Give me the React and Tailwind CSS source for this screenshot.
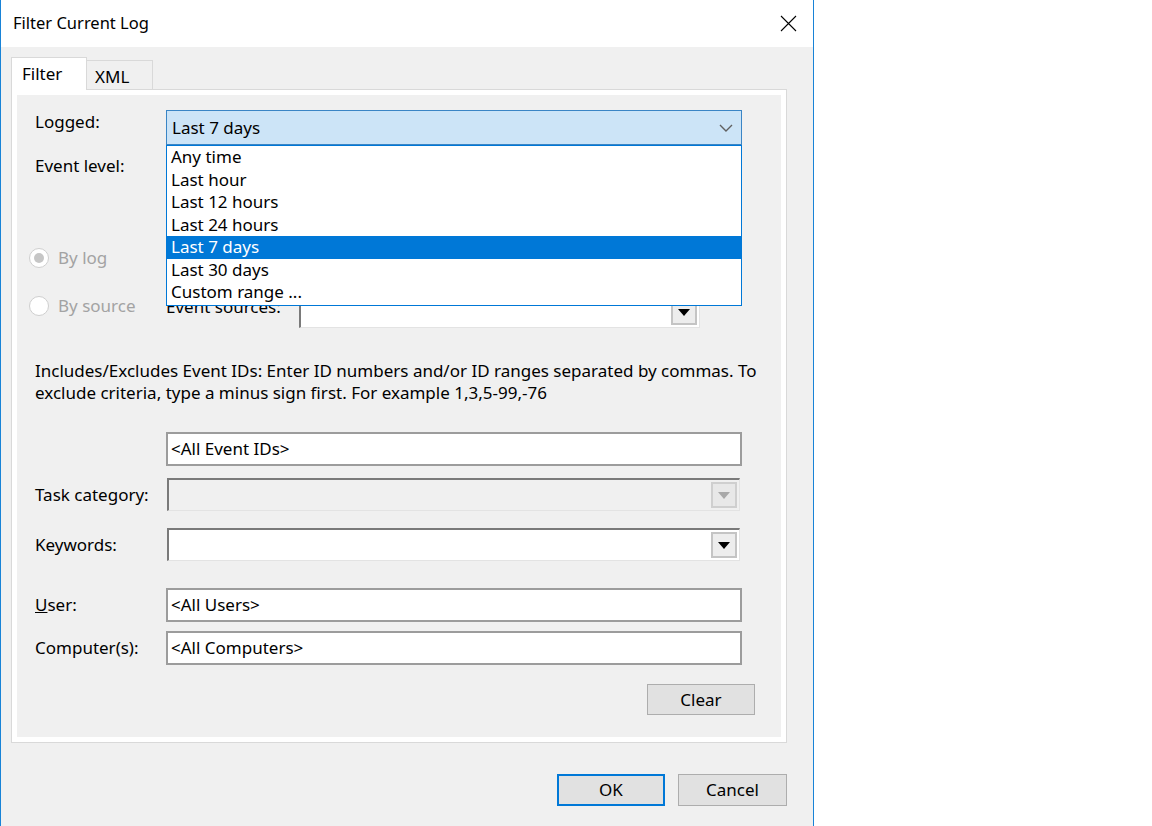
import React from "react";

const font = { fontFamily: '"Noto Sans", "Open Sans", sans-serif' };

function Chevron() {
  return (
    <svg width="14" height="8" viewBox="0 0 14 8" className="block">
      <path d="M1 1 L7 7 L13 1" fill="none" stroke="#606060" strokeWidth="1.4" />
    </svg>
  );
}

function DropBtn({ disabled }) {
  return (
    <div
      className={
        "w-[26px] h-[26px] flex items-center justify-center border-2 " +
        (disabled
          ? "border-[#cfcfcf] bg-[#e8e8e8]"
          : "border-[#c4c4c4] bg-[#ededed]")
      }
    >
      <svg width="12" height="7" viewBox="0 0 12 7">
        <path d="M0 0 H12 L6 7 Z" fill={disabled ? "#a8a8a8" : "#000"} />
      </svg>
    </div>
  );
}

function SunkenCombo({ disabled, className }) {
  return (
    <div
      className={
        "h-[33px] border-t-2 border-l-2 border-t-[#7a7a7a] border-l-[#7a7a7a] border-b border-r border-b-[#e3e3e3] border-r-[#e3e3e3] flex items-center justify-end pr-[2px] " +
        (disabled ? "bg-[#f0f0f0] " : "bg-white ") +
        className
      }
    >
      <DropBtn disabled={disabled} />
    </div>
  );
}

function TextBox({ value }) {
  return (
    <div className="w-[576px] h-[34px] border-2 border-[#9c9c9c] bg-white flex items-center pl-[3px] text-[17px] text-black">
      {value}
    </div>
  );
}

function Radio({ checked }) {
  return (
    <div className="w-[20px] h-[20px] shrink-0 rounded-full border border-[#cfcfcf] bg-white flex items-center justify-center">
      {checked && <div className="w-[10px] h-[10px] rounded-full bg-[#c6c6c6]" />}
    </div>
  );
}

function Label({ children, className = "" }) {
  return <div className={"w-[131px] shrink-0 text-[17px] leading-[22px] text-black " + className}>{children}</div>;
}

const items = ["Any time", "Last hour", "Last 12 hours", "Last 24 hours", "Last 7 days", "Last 30 days", "Custom range ..."];

export default function App() {
  return (
    <div className="w-[1152px] h-[826px] bg-white flex" style={font}>
      <div className="w-[814px] h-full border-x border-[#1883d7] flex flex-col">
        {/* title bar */}
        <div className="h-[47px] bg-white flex items-center justify-between pl-[12px] pr-[16px]">
          <span className="text-[16.5px] text-black">Filter Current Log</span>
          <svg width="17" height="17" viewBox="0 0 17 17">
            <path d="M1 1 L16 16 M16 1 L1 16" stroke="#000" strokeWidth="1.1" />
          </svg>
        </div>
        {/* body */}
        <div className="flex-1 bg-[#f0f0f0] flex flex-col">
          {/* tabs */}
          <div className="mt-[10px] ml-[10px] h-[32px] flex items-end">
            <div className="relative z-10 w-[76px] h-[33px] -mb-px bg-white border border-b-0 border-[#d9d9d9] flex items-start pl-[10px] pt-[3px] text-[17px] text-black">
              Filter
            </div>
            <div className="w-[66px] h-[29px] border border-l-0 border-b-0 border-[#d9d9d9] bg-[#f0f0f0] flex items-start pl-[8px] pt-[3px] text-[17px] text-black">
              XML
            </div>
          </div>
          {/* panel */}
          <div className="ml-[10px] w-[776px] h-[654px] border border-[#d9d9d9] bg-white p-[5px]">
            <div className="relative h-full bg-[#f0f0f0] pl-[18px] pt-[15px] flex flex-col">
              {/* Logged */}
              <div className="flex items-start">
                <Label className="pt-[1px]">Logged:</Label>
                <div className="w-[576px] h-[35px] border border-[#3a85c5] bg-[#cce4f7] flex items-center justify-between pl-[5px] pr-[8px] text-[17px] text-black">
                  <span>Last 7 days</span>
                  <Chevron />
                </div>
              </div>
              {/* Event level */}
              <div className="mt-[10px] flex">
                <Label>Event level:</Label>
              </div>
              {/* By log */}
              <div className="mt-[67px] h-[28px] flex items-center">
                <div className="w-[137px] shrink-0 flex items-center gap-[9px] -ml-[6px] text-[17px] text-[#a3a3a3]">
                  <Radio checked />
                  <span>By log</span>
                </div>
              </div>
              {/* By source */}
              <div className="mt-[20px] h-[36px] flex items-start">
                <div className="w-[137px] shrink-0 h-[28px] flex items-center gap-[9px] -ml-[6px] text-[17px] text-[#a3a3a3]">
                  <Radio />
                  <span>By source</span>
                </div>
                <div className="h-[30px] flex items-center w-[133px] shrink-0 text-[17px] text-black">Event sources:</div>
                <SunkenCombo className="w-[401px] mt-[3px] h-[31px]" />
              </div>
              {/* description */}
              <div className="mt-[32px] text-[17px] leading-[22px] text-black">
                <div>Includes/Excludes Event IDs: Enter ID numbers and/or ID ranges separated by commas. To</div>
                <div>exclude criteria, type a minus sign first. For example 1,3,5-99,-76</div>
              </div>
              {/* Event IDs */}
              <div className="mt-[28px] flex">
                <div className="w-[131px] shrink-0" />
                <TextBox value="<All Event IDs>" />
              </div>
              {/* Task category */}
              <div className="mt-[12px] flex items-center">
                <Label>Task category:</Label>
                <SunkenCombo disabled className="w-[573px] ml-px" />
              </div>
              {/* Keywords */}
              <div className="mt-[17px] flex items-center">
                <Label>Keywords:</Label>
                <SunkenCombo className="w-[573px] ml-px" />
              </div>
              {/* User */}
              <div className="mt-[27px] flex items-center">
                <Label><span className="underline">U</span>ser:</Label>
                <TextBox value="<All Users>" />
              </div>
              {/* Computers */}
              <div className="mt-[9px] flex items-center">
                <Label>Computer(s):</Label>
                <TextBox value="<All Computers>" />
              </div>
              {/* Clear */}
              <div className="mt-[19px] flex justify-end pr-[26px]">
                <div className="w-[108px] h-[31px] bg-[#e1e1e1] border border-[#adadad] flex items-center justify-center text-[17px] text-black">
                  Clear
                </div>
              </div>

              {/* dropdown list overlay */}
              <div className="absolute left-[149px] top-[50px] w-[576px] border border-[#0078d7] bg-white pb-px z-20 text-[17px] text-black">
                {items.map((it) => (
                  <div
                    key={it}
                    className={
                      "h-[22.5px] leading-[22.5px] pl-[4px] " +
                      (it === "Last 7 days" ? "bg-[#0078d7] text-white" : "")
                    }
                  >
                    {it}
                  </div>
                ))}
              </div>
            </div>
          </div>
          {/* OK / Cancel */}
          <div className="mt-[31px] flex justify-end gap-[13px] pr-[26px]">
            <div className="w-[108px] h-[32px] bg-[#e1e1e1] border-2 border-[#0078d7] flex items-center justify-center text-[17px] text-black">
              OK
            </div>
            <div className="w-[109px] h-[32px] bg-[#e1e1e1] border border-[#adadad] flex items-center justify-center text-[17px] text-black">
              Cancel
            </div>
          </div>
        </div>
      </div>
      <div className="flex-1 bg-white" />
    </div>
  );
}
